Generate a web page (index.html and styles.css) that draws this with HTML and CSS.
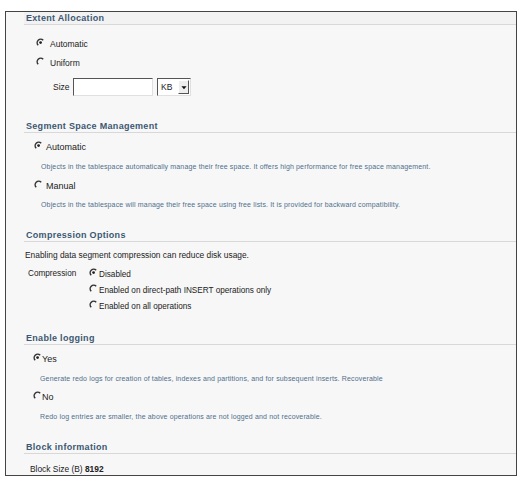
FILE: index.html
```html
<!DOCTYPE html>
<html>
<head>
    <link rel="stylesheet" href="styles.css">
</head>
<body>
    <div class="frame">

        <div class="hd hd-first">Extent Allocation</div>
        <div class="opt opt-a r1">
            <svg class="radio" viewBox="0 0 9 9"><path d="M7.2 2.2 A3.4 3.4 0 0 0 2.2 7.2"/><circle cx="4.6" cy="4.6" r="1.4"/></svg>
            <span>Automatic</span>
        </div>
        <div class="opt opt-a r2">
            <svg class="radio" viewBox="0 0 9 9"><path d="M7.2 2.2 A3.4 3.4 0 0 0 2.2 7.2"/></svg>
            <span>Uniform</span>
        </div>
        <div class="size-row">
            <span class="size-label">Size</span>
            <input class="size-input" type="text">
            <span class="unit"><span class="unit-text">KB</span><span class="unit-btn"><svg viewBox="0 0 7 5"><path d="M0.5 1 L6.5 1 L3.5 4.5 Z"/></svg></span></span>
        </div>

        <div class="hd hd-seg">Segment Space Management</div>
        <div class="opt opt-b r3">
            <svg class="radio" viewBox="0 0 9 9"><path d="M7.2 2.2 A3.4 3.4 0 0 0 2.2 7.2"/><circle cx="4.6" cy="4.6" r="1.4"/></svg>
            <span>Automatic</span>
        </div>
        <div class="desc desc-b r4">Objects in the tablespace automatically manage their free space. It offers high performance for free space management.</div>
        <div class="opt opt-b r5">
            <svg class="radio" viewBox="0 0 9 9"><path d="M7.2 2.2 A3.4 3.4 0 0 0 2.2 7.2"/></svg>
            <span>Manual</span>
        </div>
        <div class="desc desc-b r6">Objects in the tablespace will manage their free space using free lists. It is provided for backward compatibility.</div>

        <div class="hd hd-mid">Compression Options</div>
        <div class="text text-c r7">Enabling data segment compression can reduce disk usage.</div>
        <div class="comp">
            <span class="comp-label">Compression</span>
            <div class="comp-list">
                <div class="opt opt-c">
                    <svg class="radio" viewBox="0 0 9 9"><path d="M7.2 2.2 A3.4 3.4 0 0 0 2.2 7.2"/><circle cx="4.6" cy="4.6" r="1.4"/></svg>
                    <span>Disabled</span>
                </div>
                <div class="opt opt-c">
                    <svg class="radio" viewBox="0 0 9 9"><path d="M7.2 2.2 A3.4 3.4 0 0 0 2.2 7.2"/></svg>
                    <span>Enabled on direct-path INSERT operations only</span>
                </div>
                <div class="opt opt-c">
                    <svg class="radio" viewBox="0 0 9 9"><path d="M7.2 2.2 A3.4 3.4 0 0 0 2.2 7.2"/></svg>
                    <span>Enabled on all operations</span>
                </div>
            </div>
        </div>

        <div class="hd hd-log">Enable logging</div>
        <div class="opt opt-d r8">
            <svg class="radio" viewBox="0 0 9 9"><path d="M7.2 2.2 A3.4 3.4 0 0 0 2.2 7.2"/><circle cx="4.6" cy="4.6" r="1.4"/></svg>
            <span>Yes</span>
        </div>
        <div class="desc desc-d r9">Generate redo logs for creation of tables, indexes and partitions, and for subsequent inserts. Recoverable</div>
        <div class="opt opt-d r10">
            <svg class="radio" viewBox="0 0 9 9"><path d="M7.2 2.2 A3.4 3.4 0 0 0 2.2 7.2"/></svg>
            <span>No</span>
        </div>
        <div class="desc desc-d r11">Redo log entries are smaller, the above operations are not logged and not recoverable.</div>

        <div class="hd hd-block">Block information</div>
        <div class="text text-e r12">Block Size (B) <b>8192</b></div>

    </div>
</body>
</html>
```

FILE: styles.css
```css
body {
    margin: 0;
    background-color: #fff;
    font-family: "Liberation Sans", Arial, sans-serif;
    color: #222;
}
.frame {
    box-sizing: border-box;
    margin: 11px 0 0 5px;
    width: 512px;
    height: 465px;
    border: 1px solid #444;
    background-color: #f7f7f7;
}
.hd {
    margin-left: 18px;
    padding-left: 2px;
    height: 12px;
    line-height: 12px;
    font-size: 9px;
    font-weight: bold;
    letter-spacing: 0.3px;
    color: #3c5872;
    border-bottom: 1px solid #d8d8d8;
}
.hd-first {
    background-color: #f2f2f2;
}
.hd-seg {
    margin-top: 24px;
}
.hd-mid,
.hd-log,
.hd-block {
    margin-top: 19px;
}
.opt {
    display: flex;
    align-items: center;
    height: 14px;
    font-size: 8.5px;
}
.radio {
    width: 9px;
    height: 9px;
    flex: none;
    margin-top: -3px;
}
.radio path {
    fill: none;
    stroke: #333;
    stroke-width: 1.5;
}
.radio circle {
    fill: #222;
}
.opt-a {
    padding-left: 30px;
}
.opt-a span {
    margin-left: 5px;
}
.opt-b {
    padding-left: 28px;
}
.opt-b span {
    margin-left: 3px;
    font-size: 9px;
}
.opt-d {
    padding-left: 27px;
}
.opt-d span {
    margin-left: 0;
    font-size: 9px;
}
.opt-c span {
    margin-left: 1px;
    font-size: 8.2px;
}
.desc {
    height: 10px;
    line-height: 10px;
    font-size: 7px;
    color: #4f6f8c;
    letter-spacing: 0.15px;
}
.desc-b {
    padding-left: 35px;
}
.desc-d {
    padding-left: 34px;
}
.text {
    height: 14px;
    line-height: 14px;
    font-size: 8.4px;
}
.text-c {
    padding-left: 19px;
}
.text-e {
    padding-left: 24px;
    height: 12px;
    line-height: 12px;
}
.r1 { margin-top: 12px; }
.r2 { margin-top: 5px; }
.r3 { margin-top: 7px; }
.r4 { margin-top: 8px; }
.r5 { margin-top: 7px; }
.r6 { margin-top: 7px; }
.r7 { margin-top: 6px; }
.r8 { margin-top: 7px; }
.r9 { margin-top: 8px; }
.r10 { margin-top: 6px; }
.r11 { margin-top: 8px; }
.r12 { margin-top: 9px; }
.size-row {
    display: flex;
    align-items: center;
    margin-top: 8px;
    height: 18px;
    padding-left: 47px;
    font-size: 8.5px;
}
.size-label {
    width: 20px;
}
.size-input {
    box-sizing: border-box;
    width: 80px;
    height: 18px;
    margin: 0;
    padding: 0;
    background-color: #fff;
    border-style: solid;
    border-width: 1px;
    border-color: #555 #e0e0e0 #e0e0e0 #555;
}
.unit {
    display: flex;
    align-items: center;
    box-sizing: border-box;
    margin-left: 4px;
    width: 34px;
    height: 18px;
    background-color: #fff;
    border-style: solid;
    border-width: 1px;
    border-color: #555 #e0e0e0 #e0e0e0 #555;
}
.unit-text {
    padding-left: 3px;
    flex: 1;
    font-size: 8.5px;
}
.unit-btn {
    display: flex;
    align-items: center;
    justify-content: center;
    box-sizing: border-box;
    width: 11px;
    height: 14px;
    margin-right: 1px;
    background-color: #eee;
    border-style: solid;
    border-width: 1px;
    border-color: #fff #555 #555 #fff;
}
.unit-btn svg {
    width: 6px;
    height: 5px;
    fill: #111;
}
.comp {
    display: flex;
    margin-top: 5px;
    padding-left: 22px;
}
.comp-label {
    width: 61px;
    height: 14px;
    line-height: 14px;
    font-size: 8.2px;
}
.comp-list {
    display: flex;
    flex-direction: column;
    gap: 2px;
}
```
